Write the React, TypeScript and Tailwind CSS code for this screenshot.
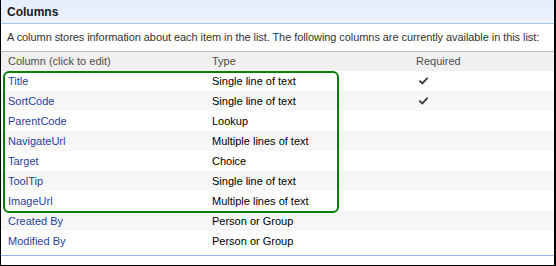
const rows = [
  { name: 'Title', type: 'Single line of text', required: true },
  { name: 'SortCode', type: 'Single line of text', required: true },
  { name: 'ParentCode', type: 'Lookup', required: false },
  { name: 'NavigateUrl', type: 'Multiple lines of text', required: false },
  { name: 'Target', type: 'Choice', required: false },
  { name: 'ToolTip', type: 'Single line of text', required: false },
  { name: 'ImageUrl', type: 'Multiple lines of text', required: false },
  { name: 'Created By', type: 'Person or Group', required: false },
  { name: 'Modified By', type: 'Person or Group', required: false },
];

function Check() {
  return (
    <svg width="9" height="8" viewBox="0 0 9 8" className="block">
      <path d="M1 4.2 L3.3 6.4 L8 1.4" fill="none" stroke="#3a3a3a" strokeWidth="1.8" strokeLinecap="square" />
    </svg>
  );
}

export default function App() {
  return (
    <div className="h-[266px] w-[556px] overflow-hidden bg-white font-['Liberation_Sans',Arial,sans-serif] text-[11px]">
      <div className="flex h-full flex-col border-b border-l border-r-2 border-black">
        <div className="flex h-[24px] items-center border-b border-[#a7c3ea] bg-gradient-to-b from-[#e3edfb] to-[#eef4fd] px-[6px] text-[12px] font-bold text-[#1a1a1a]">
          Columns
        </div>
        <div className="flex h-[28px] items-center border-b border-[#b3bac3] px-[6px] tracking-[-0.07px] text-[#333]">
          A column stores information about each item in the list. The following columns are currently available in this list:
        </div>
        <div className="grid h-[19px] grid-cols-[204px_204px_1fr] items-center bg-[#f0f0f0] pl-[7px] text-[#4d4d4d]">
          <span>Column (click to edit)</span>
          <span>Type</span>
          <span>Required</span>
        </div>
        <div className="relative">
          {rows.map((row, i) => (
            <div
              key={row.name}
              className={`grid h-[20px] grid-cols-[204px_204px_1fr] items-center pl-[7px] ${i % 2 === 1 ? 'bg-[#f7f7f7]' : 'bg-white'}`}
            >
              <span className="text-[#1f3f9a]">{row.name}</span>
              <span className="text-black">{row.type}</span>
              <span className="pl-[3px]">{row.required ? <Check /> : null}</span>
            </div>
          ))}
          <div className="absolute left-[2px] top-0 h-[142px] w-[336px] rounded-[6px] border-2 border-[#0b7d0b]" />
        </div>
        <div className="mt-[4px] border-t border-[#90b5e6]" />
      </div>
    </div>
  );
}
